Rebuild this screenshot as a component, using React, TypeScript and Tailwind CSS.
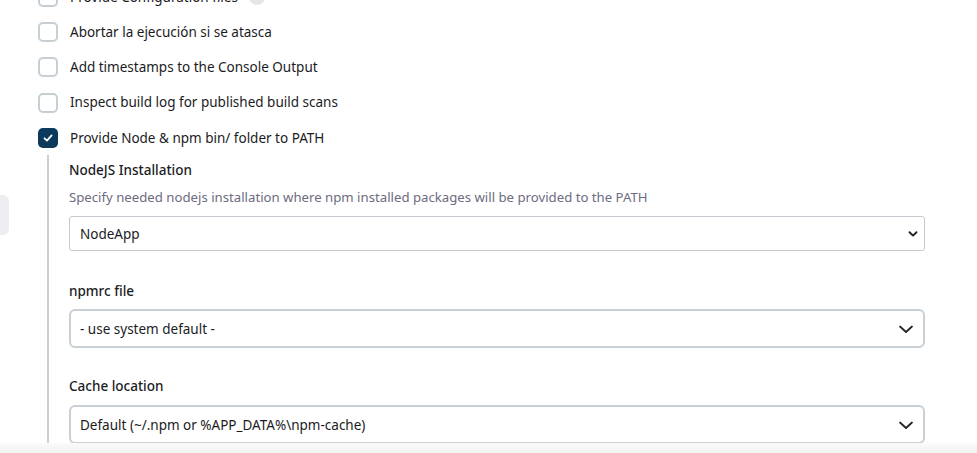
import React from "react";

const font = { fontFamily: '"Noto Sans", "Open Sans", sans-serif' };

function Box({ checked }: { checked?: boolean }) {
  if (checked) {
    return (
      <span className="flex h-[20px] w-[20px] shrink-0 items-center justify-center rounded-[5px] bg-[#0c3a5c]">
        <svg width="12" height="12" viewBox="0 0 12 12" fill="none">
          <path d="M2.5 6.3 L5 8.6 L9.6 3.4" stroke="white" strokeWidth="1.8" strokeLinecap="round" strokeLinejoin="round" />
        </svg>
      </span>
    );
  }
  return <span className="h-[20px] w-[20px] shrink-0 rounded-[5px] border-2 border-[#c6cfd4] bg-white" />;
}

function Row({ label, checked, help }: { label: string; checked?: boolean; help?: boolean }) {
  return (
    <div className="flex h-[35.3px] items-center gap-[12px]">
      <Box checked={checked} />
      <span className="text-[13.5px] text-[#1b1b24]">{label}</span>
      {help && <span className="-ml-[1px] h-[16px] w-[16px] rounded-full bg-[#e6e6ea]" />}
    </div>
  );
}

function SmallChevron() {
  return (
    <svg width="10" height="8" viewBox="0 0 10 8" fill="none">
      <path d="M1.5 2.2 L5 5.6 L8.5 2.2" stroke="#222" strokeWidth="1.9" strokeLinecap="round" strokeLinejoin="round" />
    </svg>
  );
}

function BigChevron() {
  return (
    <svg width="16" height="10" viewBox="0 0 16 10" fill="none">
      <path d="M2 2.5 L8 8 L14 2.5" stroke="#222" strokeWidth="1.7" strokeLinecap="round" strokeLinejoin="round" />
    </svg>
  );
}

export default function App() {
  return (
    <div className="flex h-[453px] w-[977px] flex-col overflow-hidden bg-white" style={font}>
      <div className="flex min-h-0 flex-1">
        <div className="w-[9px] shrink-0">
          <div className="mt-[195px] h-[40px] w-[9px] rounded-r-[6px] bg-[#ededf2]" />
        </div>
        <div className="flex flex-1 flex-col pl-[29px] pr-[52px]">
          <div className="-mt-[21px]">
            <Row label="Provide Configuration files" help />
            <Row label="Abortar la ejecución si se atasca" />
            <Row label="Add timestamps to the Console Output" />
            <Row label="Inspect build log for published build scans" />
            <Row label="Provide Node & npm bin/ folder to PATH" checked />
          </div>
          <div className="ml-[9px] flex flex-1 flex-col border-l-2 border-[#c9d0d5] pl-[20px]">
            <div className="mt-[5px] h-[20px] text-[13.5px] font-medium leading-[20px] text-[#1b1b24]">NodeJS Installation</div>
            <div className="mt-[7px] h-[20px] text-[13.2px] leading-[20px] text-[#6d6b80]">
              Specify needed nodejs installation where npm installed packages will be provided to the PATH
            </div>
            <div className="mt-[9px] flex h-[35px] items-center justify-between rounded-[3px] border border-[#c5cad1] bg-white pl-[10px] pr-[6px] text-[13.5px] text-[#1b1b24]">
              <span>NodeApp</span>
              <SmallChevron />
            </div>
            <div className="mt-[30px] h-[20px] text-[13.5px] font-medium leading-[20px] text-[#1b1b24]">npmrc file</div>
            <div className="mt-[8px] flex h-[39px] items-center justify-between rounded-[6px] border-2 border-[#c9d0d5] bg-white pl-[9px] pr-[9px] text-[13.5px] text-[#1b1b24]">
              <span>- use system default -</span>
              <BigChevron />
            </div>
            <div className="mt-[28px] h-[20px] text-[13.5px] font-medium leading-[20px] text-[#1b1b24]">Cache location</div>
            <div className="mt-[9px] flex h-[39px] items-center justify-between rounded-[6px] border-2 border-[#c9d0d5] bg-white pl-[9px] pr-[9px] text-[13.5px] text-[#1b1b24]">
              <span>Default (~/.npm or %APP_DATA%\npm-cache)</span>
              <BigChevron />
            </div>
          </div>
        </div>
      </div>
      <div className="h-[10px] shrink-0 bg-gradient-to-b from-[#fbfbfb] to-[#f2f2f2]" />
    </div>
  );
}
